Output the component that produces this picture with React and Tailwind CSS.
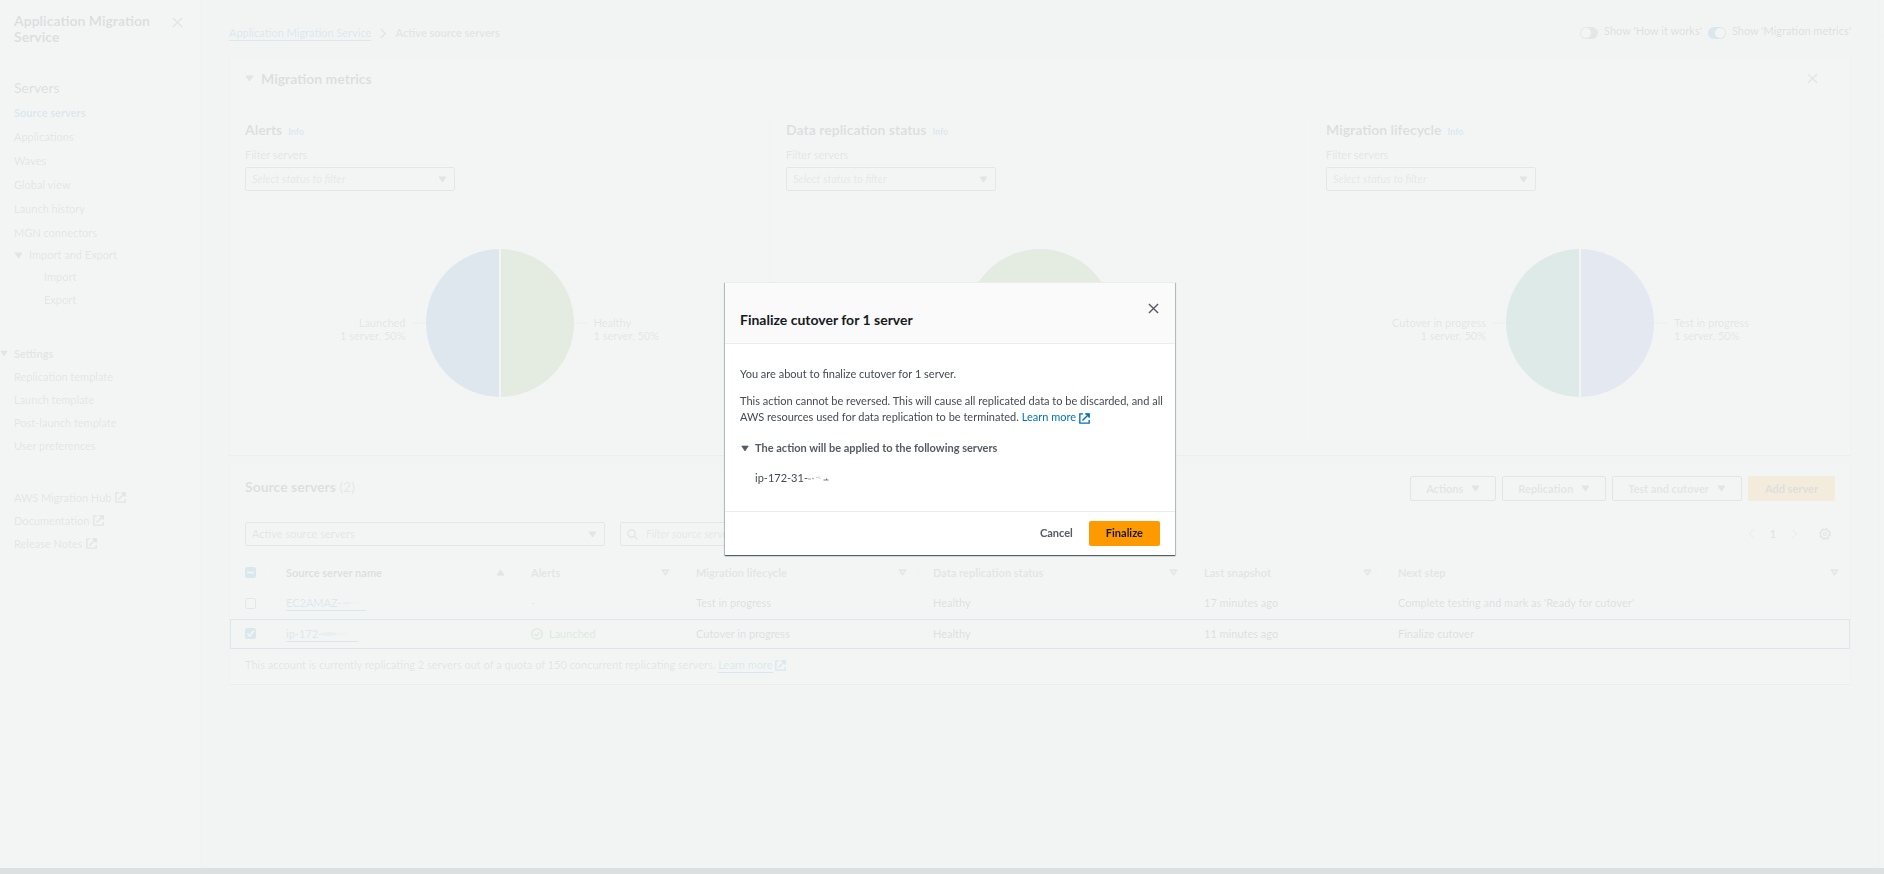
import { useRef, useEffect } from "react";

function Triangle({ className }) {
  return (
    <svg viewBox="0 0 10 8" className={className} fill="currentColor" stroke="currentColor" strokeWidth="1" strokeLinejoin="round" aria-hidden="true">
      <path d="M1 1h8L5 7z" />
    </svg>
  );
}

function SortIcon() {
  return (
    <svg viewBox="0 0 10 8" className="h-[7px] w-[9px] text-[#687078]" fill="none" stroke="currentColor" strokeWidth="2" strokeLinejoin="round" aria-hidden="true">
      <path d="M1.5 1.2h7L5 6.5z" />
    </svg>
  );
}

function External({ className }) {
  return (
    <svg viewBox="0 0 16 16" className={className} fill="none" stroke="currentColor" strokeWidth="2" aria-hidden="true">
      <path d="M6 1.2H1.2v13.6h13.6V10" />
      <path d="M5 11l7.5-7.5" />
      <path d="M9 1h6v6z" fill="currentColor" stroke="none" />
      <path d="M9 1.2h5.8V7" />
    </svg>
  );
}

function Close({ className }) {
  return (
    <svg viewBox="0 0 12 12" className={className} fill="none" stroke="currentColor" strokeWidth="1.5" aria-hidden="true">
      <path d="M1 1l10 10M11 1L1 11" />
    </svg>
  );
}

function Chevron({ className, left }) {
  return (
    <svg viewBox="0 0 8 12" className={className} fill="none" stroke="currentColor" strokeWidth="1.5" aria-hidden="true">
      <path d={left ? "M6.5 1l-5 5 5 5" : "M1.5 1l5 5-5 5"} />
    </svg>
  );
}

function SideLink({ children, external }) {
  return (
    <li className="flex h-[23px] items-center gap-1">
      <a href="#">{children}</a>
      {external && <External className="h-[11px] w-[11px]" />}
    </li>
  );
}

function Sidebar() {
  return (
    <aside className="w-[201px] shrink-0 border-r border-[#d5dbdb] bg-white">
      <div className="flex h-[63px] items-start justify-between border-b border-[#eaeded] pt-[13px] pr-[17px] pl-[14px]">
        <h2 className="w-[145px] text-sm leading-4 font-bold text-[#16191f]">Application Migration Service</h2>
        <button aria-label="Close navigation" className="mt-1"><Close className="h-[11px] w-[11px]" /></button>
      </div>
      <nav className="pt-4">
        <h3 className="pl-[14px] text-sm leading-[18px] text-[#16191f]">Servers</h3>
        <ul className="pt-1 pl-[14px]">
          {["Source servers", "Applications", "Waves", "Global view", "Launch history", "MGN connectors"].map((t, i) => (
            <li key={t} className="flex h-6 items-center">
              <a href="#" className={i === 0 ? "font-bold text-[#0073bb]" : ""}>{t}</a>
            </li>
          ))}
          <li>
            <button className="flex h-5 items-center gap-[6px]">
              <Triangle className="h-[7px] w-[9px]" />Import and Export
            </button>
            <ul className="pl-[30px]">
              <SideLink>Import</SideLink>
              <SideLink>Export</SideLink>
            </ul>
          </li>
        </ul>
        <hr className="mt-4 mr-4 ml-[5px] border-[#eaeded]" />
        <button className="mt-[14px] flex h-[23px] items-center gap-[6px] font-bold">
          <Triangle className="h-[7px] w-2" />Settings
        </button>
        <ul className="pl-[14px]">
          <SideLink>Replication template</SideLink>
          <SideLink>Launch template</SideLink>
          <SideLink>Post-launch template</SideLink>
          <SideLink>User preferences</SideLink>
        </ul>
        <hr className="mt-4 mr-4 ml-[5px] border-[#eaeded]" />
        <ul className="pt-3 pl-[14px]">
          <SideLink external>AWS Migration Hub</SideLink>
          <SideLink external>Documentation</SideLink>
          <SideLink external>Release Notes</SideLink>
        </ul>
      </nav>
    </aside>
  );
}

function Toggle({ id, label, on }) {
  return (
    <div className="flex items-center gap-[6px]">
      <input
        id={id}
        type="checkbox"
        role="switch"
        defaultChecked={on}
        className="mt-1 h-3 w-[18px] appearance-none rounded-full bg-[#687078] p-[1px] before:block before:h-[10px] before:w-[10px] before:rounded-full before:bg-white checked:bg-[#0073bb] checked:before:ml-auto"
      />
      <label htmlFor={id}>{label}</label>
    </div>
  );
}

function StatusSelect({ id, label, text, className = "", italic }) {
  return (
    <div className={className}>
      {label && <label htmlFor={id} className="mb-1 block leading-4">{label}</label>}
      <div className="relative">
        <select
          id={id}
          aria-label={label ? undefined : text}
          className={
            italic
              ? "block h-6 w-full appearance-none rounded-xs border border-[#687078] bg-white px-[6px] text-[#687078] italic"
              : "block h-6 w-full appearance-none rounded-xs border border-[#687078] bg-white px-[6px]"
          }
        >
          <option>{text}</option>
        </select>
        <Triangle className="pointer-events-none absolute top-[9px] right-2 h-[7px] w-[9px]" />
      </div>
    </div>
  );
}

function SplitPie({ left, right, leftColor, rightColor }) {
  return (
    <div className="mt-[58px] flex items-center justify-center gap-1">
      <div className="w-[120px] pt-3 text-right leading-[13px]">{left}<br />1 server, 50%</div>
      <svg viewBox="0 0 180 148" className="h-[148px] w-[180px]" aria-hidden="true">
        <path d="M2 74h14M164 74h14" stroke="#aab7b8" />
        <path d="M90 0a74 74 0 0 0 0 148z" fill={leftColor} />
        <path d="M90 0a74 74 0 0 1 0 148z" fill={rightColor} />
        <path d="M90 0v148" stroke="#fff" strokeWidth="2" />
      </svg>
      <div className="w-[120px] pt-3 leading-[13px]">{right}<br />1 server, 50%</div>
    </div>
  );
}

function FullPie({ color }) {
  return (
    <div className="mt-[58px] flex justify-center">
      <svg viewBox="0 0 148 148" className="h-[148px] w-[148px]" aria-hidden="true">
        <circle cx="74" cy="74" r="74" fill={color} />
      </svg>
    </div>
  );
}

const metrics = [
  { title: "Alerts", pie: <SplitPie left="Launched" right="Healthy" leftColor="#326ebe" rightColor="#67a04b" /> },
  { title: "Data replication status", pie: <FullPie color="#67a04b" /> },
  { title: "Migration lifecycle", pie: <SplitPie left="Cutover in progress" right="Test in progress" leftColor="#288c82" rightColor="#6478dc" /> },
];

function Metrics() {
  return (
    <section className="border border-t-[#eaeded] border-x-[#d5dbdb] border-b-[#aab7b8] bg-white">
      <header className="flex h-[47px] items-center justify-between border-b border-[#eaeded] bg-[#fafafa] pr-8 pb-[5px] pl-[15px]">
        <button className="flex items-center gap-[7px] text-sm leading-4 font-bold text-[#16191f]">
          <Triangle className="h-[7px] w-[9px] text-[#545b64]" />Migration metrics
        </button>
        <button aria-label="Close metrics"><Close className="h-[11px] w-[11px]" /></button>
      </header>
      <div className="grid grid-cols-3 pt-3 pb-[11px]">
        {metrics.map((m, i) => (
          <div key={m.title} className={i ? "h-[327px] border-l border-[#eaeded] pr-4 pl-[15px]" : "h-[327px] pr-4 pl-[15px]"}>
            <h3 className="flex items-baseline gap-[6px] pt-1 text-sm leading-[18px] font-bold text-[#16191f]">
              {m.title}
              <a href="#" className="text-[9px] font-bold text-[#0073bb]">Info</a>
            </h3>
            <StatusSelect id={`filter-${i}`} label="Filter servers" text="Select status to filter" italic className="mt-[6px] w-[210px]" />
            {m.pie}
          </div>
        ))}
      </div>
    </section>
  );
}

function ActionButton({ children }) {
  return (
    <button className="flex h-[25px] items-center gap-2 rounded-xs border border-[#545b64] px-[15px] font-bold">
      {children}
      <Triangle className="h-[7px] w-[9px]" />
    </button>
  );
}

function PrimaryButton({ children }) {
  return <button className="h-[25px] rounded-xs bg-[#ff9900] px-[17px] font-bold text-[#16191f]">{children}</button>;
}

function Check({ label, mixed, checked }) {
  const ref = useRef(null);
  useEffect(() => {
    ref.current.indeterminate = !!mixed;
  }, [mixed]);
  return (
    <span className="relative block h-[11px] w-[11px]">
      <input
        ref={ref}
        type="checkbox"
        aria-label={label}
        defaultChecked={checked}
        className="block h-[11px] w-[11px] appearance-none rounded-xs border border-[#687078] bg-white checked:border-[#0073bb] checked:bg-[#0073bb] indeterminate:border-[#0073bb] indeterminate:bg-[#0073bb]"
      />
      <svg viewBox="0 0 11 11" className="pointer-events-none absolute inset-0" fill="none" stroke="#fff" strokeWidth="1.6" aria-hidden="true">
        {mixed && <path d="M2 5.5h7" />}
        {checked && <path d="M2.2 5.6l2.4 2.4 4.2-5.2" />}
      </svg>
    </span>
  );
}

function Head({ children, sort, last }) {
  return (
    <th className="h-[30px] p-0 text-left font-bold">
      <div className={last ? "flex h-[14px] items-center justify-between pr-[11px] pl-[15px]" : "flex h-[14px] items-center justify-between border-r border-[#eaeded] pr-[10px] pl-[15px]"}>
        {children}
        {sort === "asc" ? <Triangle className="h-[7px] w-[9px] rotate-180" /> : <SortIcon />}
      </div>
    </th>
  );
}

function Smudge({ className }) {
  return (
    <svg viewBox="0 0 44 12" className={className} fill="currentColor" aria-hidden="true">
      <ellipse cx="9" cy="6" rx="9" ry="2.5" opacity="0.35" />
      <ellipse cx="24" cy="6" rx="8" ry="2" opacity="0.2" />
    </svg>
  );
}

function Servers() {
  return (
    <section className="mt-2 border border-t-[#eaeded] border-x-[#d5dbdb] border-b-[#aab7b8] bg-white">
      <header className="bg-[#fafafa] pr-[15px] pb-[11px] pl-[15px]">
        <div className="flex items-center justify-between pt-[11px]">
          <h2 className="pb-1 text-sm leading-4 font-bold text-[#16191f]">
            Source servers <span className="font-normal text-[#687078]">(2)</span>
          </h2>
          <div className="flex gap-[6px]">
            <ActionButton>Actions</ActionButton>
            <ActionButton>Replication</ActionButton>
            <ActionButton>Test and cutover</ActionButton>
            <PrimaryButton>Add server</PrimaryButton>
          </div>
        </div>
        <div className="flex items-center pt-[21px]">
          <StatusSelect id="view" text="Active source servers" className="w-[360px]" />
          <div className="ml-[15px] flex h-6 w-[480px] items-center gap-2 rounded-xs border border-[#687078] bg-white pl-[6px]">
            <svg viewBox="0 0 12 12" className="h-[11px] w-[11px]" fill="none" stroke="currentColor" strokeWidth="1.5" aria-hidden="true">
              <circle cx="5" cy="5" r="4" />
              <path d="M8 8l3.5 3.5" />
            </svg>
            <input aria-label="Filter source servers" placeholder="Filter source servers" className="flex-1 placeholder:text-[#687078] placeholder:italic" />
          </div>
          <div className="ml-auto flex items-center">
            <button aria-label="Previous page" className="text-[#aab7b8]"><Chevron left className="h-3 w-[7px]" /></button>
            <button className="w-9 text-center font-bold">1</button>
            <button aria-label="Next page" className="text-[#aab7b8]"><Chevron className="h-3 w-[7px]" /></button>
            <button aria-label="Preferences" className="ml-[10px] h-6 border-l border-[#eaeded] pr-1 pl-[10px]">
              <svg viewBox="0 0 14 14" className="h-3 w-3" fill="none" stroke="currentColor" aria-hidden="true">
                <circle cx="7" cy="7" r="5.2" strokeWidth="1.6" />
                <circle cx="7" cy="7" r="6.3" strokeWidth="1.3" strokeDasharray="2.6 2.35" />
                <circle cx="7" cy="7" r="1.8" strokeWidth="1.3" />
              </svg>
            </button>
          </div>
        </div>
      </header>
      <table className="w-full table-fixed border-collapse">
        <colgroup>
          <col className="w-[41px]" />
          <col className="w-[245px]" />
          <col className="w-[165px]" />
          <col className="w-[237px]" />
          <col className="w-[271px]" />
          <col className="w-[194px]" />
          <col />
        </colgroup>
        <thead>
          <tr className="border-y border-[#eaeded] bg-[#fafafa]">
            <th className="p-0">
              <div className="flex h-[14px] items-center border-r border-[#eaeded] pl-[15px]"><Check label="Select all" mixed /></div>
            </th>
            <Head sort="asc"><span className="text-[#16191f]">Source server name</span></Head>
            <Head>Alerts</Head>
            <Head>Migration lifecycle</Head>
            <Head>Data replication status</Head>
            <Head>Last snapshot</Head>
            <Head last>Next step</Head>
          </tr>
        </thead>
        <tbody className="text-[#16191f] [&_td]:p-0 [&_td]:pl-[15px]">
          <tr className="h-[31px]">
            <td><Check label="Select EC2AMAZ" /></td>
            <td>
              <a href="#" className="inline-flex items-center border-b border-[#0073bb] leading-[14px] text-[#0073bb]">EC2AMAZ-<Smudge className="h-3 w-6" /></a>
            </td>
            <td className="text-[#687078]">-</td>
            <td>Test in progress</td>
            <td>Healthy</td>
            <td>17 minutes ago</td>
            <td>Complete testing and mark as 'Ready for cutover'</td>
          </tr>
          <tr className="h-[30px] bg-[#f1faff] outline outline-1 -outline-offset-1 outline-[#0073bb]">
            <td><Check label="Select ip-172" checked /></td>
            <td>
              <a href="#" className="inline-flex items-center border-b border-[#0073bb] leading-[14px] text-[#0073bb]">ip-172-<Smudge className="h-3 w-9" /></a>
            </td>
            <td>
              <span className="flex items-center gap-[6px] text-[#1d8102]">
                <svg viewBox="0 0 14 14" className="h-3 w-3" fill="none" stroke="currentColor" strokeWidth="1.6" aria-hidden="true">
                  <circle cx="7" cy="7" r="6" />
                  <path d="M4.2 7l2 2.1 3.6-4" />
                </svg>
                Launched
              </span>
            </td>
            <td>Cutover in progress</td>
            <td>Healthy</td>
            <td>11 minutes ago</td>
            <td>Finalize cutover</td>
          </tr>
        </tbody>
      </table>
      <footer className="flex h-[35px] items-center pb-[2px] pl-[15px]">
        <p className="flex items-center">
          This account is currently replicating 2 servers out of a quota of 150 concurrent replicating servers.
          <a href="#" className="ml-[3px] flex items-center border-b border-[#0073bb] leading-[14px] text-[#0073bb]">Learn more</a>
          <External className="ml-[2px] h-[11px] w-[11px] text-[#0073bb]" />
        </p>
      </footer>
    </section>
  );
}

function Modal() {
  return (
    <div className="fixed inset-0 flex items-center justify-center bg-[#f2f4f3]/90 pb-[38px] pl-4">
      <div role="dialog" aria-modal="true" aria-labelledby="dialog-title" className="w-[450px] border-t border-[#eaeded] bg-white shadow-[0_1px_1px_0_rgba(0,28,36,0.5),1px_1px_1px_0_rgba(0,28,36,0.2),-1px_1px_1px_0_rgba(0,28,36,0.2)]">
        <header className="flex h-[61px] items-start justify-between border-b border-[#eaeded] bg-[#fafafa] pt-5 pr-4 pl-[15px]">
          <h1 id="dialog-title" className="pt-[9px] text-sm leading-4 font-bold text-[#16191f]">Finalize cutover for 1 server</h1>
          <button aria-label="Close"><Close className="h-[11px] w-[11px] text-[#545b64]" /></button>
        </header>
        <div className="pt-[22px] pr-[10px] pb-[25px] pl-[15px] text-[#444a52]">
          <p className="leading-4">You are about to finalize cutover for 1 server.</p>
          <p className="mt-[11px] leading-4">
            This action cannot be reversed. This will cause all replicated data to be discarded, and all AWS resources used for data replication to be terminated.{" "}
            <a href="#" className="text-[#0073bb]">
              Learn more <External className="inline h-[11px] w-[11px] align-[-3px]" />
            </a>
          </p>
          <button className="mt-[15px] flex items-center gap-[6px] leading-4 font-bold text-[#545b64]">
            <Triangle className="mt-[2px] ml-[1px] h-[7px] w-2" />The action will be applied to the following servers
          </button>
          <div className="mt-[14px] flex items-center pl-[15px] leading-4">
            ip-172-31-
            <svg viewBox="0 0 22 8" className="h-2 w-[22px]" fill="none" stroke="#545b64" aria-hidden="true">
              <path d="M0 5h3M4 4l2 1" opacity="0.6" />
              <path d="M8 3.5l4-.5M12 4v1" opacity="0.3" />
              <path d="M15.5 6h3M18.5 4.5V6h2" opacity="0.8" />
            </svg>
          </div>
        </div>
        <footer className="flex h-[44px] items-center justify-end gap-4 border-t border-[#eaeded] pr-[15px]">
          <button className="font-bold text-[#545b64]">Cancel</button>
          <PrimaryButton>Finalize</PrimaryButton>
        </footer>
      </div>
    </div>
  );
}

export default function App() {
  return (
    <div className="flex min-h-screen flex-col bg-[#f2f3f3] font-[Lato,sans-serif] text-[11px] leading-4 text-[#545b64]">
      <div className="flex flex-1">
        <Sidebar />
        <main className="min-w-0 flex-1 px-7">
          <div className="flex h-[57px] items-center justify-between pt-1">
            <nav aria-label="Breadcrumb" className="flex items-center gap-2 pt-[5px]">
              <a href="#" className="border-b border-[#0073bb] leading-[14px] text-[#0073bb]">Application Migration Service</a>
              <Chevron className="h-[11px] w-2" />
              <span className="font-bold">Active source servers</span>
            </nav>
            <div className="flex gap-[6px] text-[#16191f]">
              <Toggle id="how" label="Show 'How it works'" />
              <Toggle id="metrics" label="Show 'Migration metrics'" on />
            </div>
          </div>
          <Metrics />
          <Servers />
        </main>
        <div className="w-[5px] border-l border-[#d5dbdb] bg-white pt-[35px]">
          <hr className="border-[#d5dbdb]" />
        </div>
      </div>
      <div className="h-[6px] bg-[#232f3e]" />
      <Modal />
    </div>
  );
}
